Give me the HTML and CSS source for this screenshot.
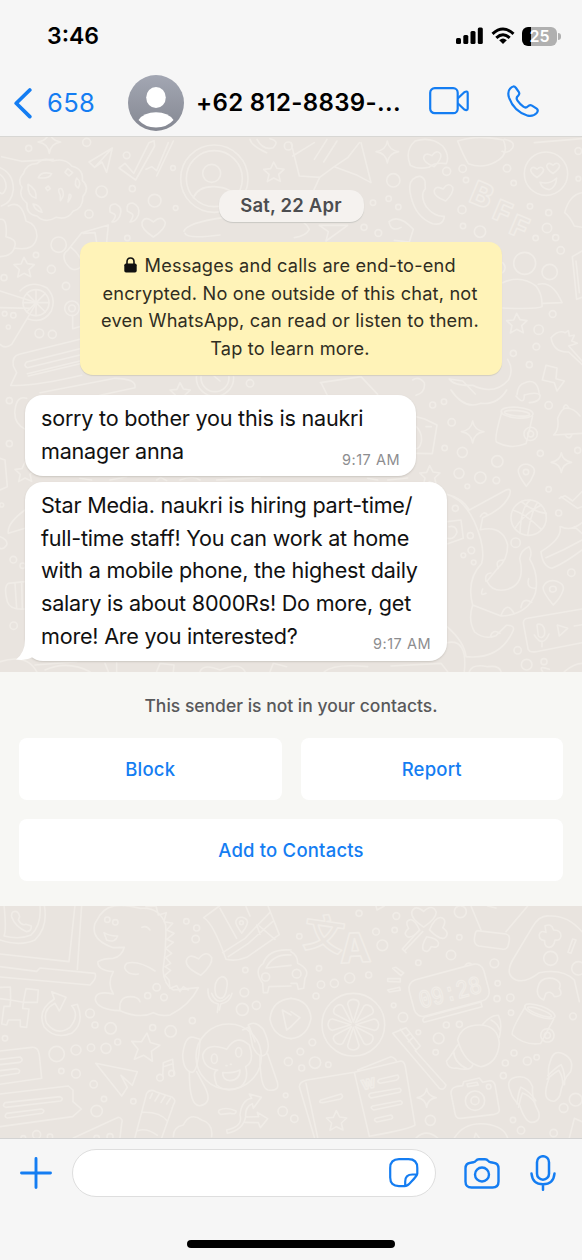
FILE: index.html
```html
<!DOCTYPE html>
<html lang="en">
<head>
<meta charset="utf-8">
<title>Chat</title>
<link rel="stylesheet" href="styles.css">
</head>
<body>
<div class="phone">
  <header class="top">
    <div class="status">
      <span class="clock">3:46</span>
      <div class="status-icons">
        <svg class="signal" width="28" height="18" viewBox="0 0 28 18"><rect x="0" y="11" width="5" height="6" rx="1.5"/><rect x="7.3" y="8" width="5" height="9" rx="1.5"/><rect x="14.5" y="4" width="5" height="13" rx="1.5"/><rect x="21.8" y="0.5" width="5" height="16.5" rx="1.5"/></svg>
        <svg class="wifi" width="24" height="18" viewBox="0 0 24 18"><path d="M1.500 6.800Q12-2.800 22.500 6.800M5.300 10.800Q12 4.800 18.700 10.800" fill="none" stroke="#000" stroke-width="3"/><path d="M8.200 13.200Q12 10 15.800 13.200L12 17Z"/></svg>
        <span class="battery"><span class="charge">25</span><i class="cap"></i></span>
      </div>
    </div>
    <div class="nav">
      <svg class="back" width="18" height="31" viewBox="0 0 18 31"><path d="M15.8 2L2.2 15.3L15.8 28.6" fill="none" stroke="#147df2" stroke-width="3.7" stroke-linecap="round" stroke-linejoin="round"/></svg>
      <span class="unread">658</span>
      <svg class="avatar" width="56" height="56" viewBox="0 0 56 56"><defs><linearGradient id="av" x1="0" y1="0" x2="0" y2="1"><stop offset="0" stop-color="#a3a7b3"/><stop offset="1" stop-color="#858892"/></linearGradient></defs><circle cx="28" cy="28" r="28" fill="url(#av)"/><ellipse cx="28" cy="22.5" rx="9.8" ry="10.5" fill="#fff"/><path d="M10.5 45Q16 37.3 28 37.3T45.500 45Q39 52.500 28 52.500T10.500 45Z" fill="#fff"/></svg>
      <span class="name">+62 812-8839-...</span>
      <svg class="video" width="41" height="28" viewBox="0 0 41 28"><rect x="1.200" y="1.200" width="27.500" height="25" rx="4.500"/><path d="M28.700 11.500L35.300 5.200Q38.600 3.500 38.700 6V21.500Q38.600 24 35.300 22.500L28.700 16.300"/></svg>
      <svg class="call" width="33" height="33" viewBox="0 0 33 33"><path d="M3.200 3.500Q6.500-.3 9 3L11.900 7.200Q13 9 11 10.900Q8.600 13 10.500 15.600Q13 19.200 16.400 21.700Q18.800 23.500 21 21.300Q22.800 19.300 25 20.600L29.700 23.700Q31.700 25.300 29.800 27.900Q26.500 31.700 20.800 30.700Q7 26.500 2 12.500Q.2 6.500 3.200 3.500Z"/></svg>
    </div>
  </header>

  <main class="chat">
    <svg class="wallpaper" viewBox="0 137 582 1001" width="582" height="1001" aria-hidden="true">
      <defs>
        <path id="star" d="M0-30L10-11L31-8L15 7L20 28L0 18L-19 29L-14 7L-30-8L-9-10Z"/>
        <path id="spark" d="M0-32Q4-5 34 0Q4 4 0 34Q-4 4-34 0Q-4-5 0-32Z"/>
        <path id="heart" d="M0 30Q-38 5-34-14Q-25-36 0-15Q25-38 36-13Q36 6 0 30Z"/>
        <path id="pin" d="M0 38Q-28 0-24-12Q-17-31 3-28Q31-20 22 2Q16 20 0 38ZM7-5A8 8 0 1 0-9-5A8 8 0 1 0 7-5"/>
        <g id="mug"><path d="M-38-36Q-55 50-45 56Q0 75 43 52L55-30"/><ellipse cx="8" cy="-38" rx="48" ry="16"/><ellipse cx="8" cy="-36" rx="38" ry="8"/><circle cx="54" cy="22" r="20"/><circle cx="54" cy="22" r="9"/></g>
        <path id="plane" d="M-60-48L65-23L50 18L16-12L35 24L18 50Z"/>
        <g id="flip"><path d="M-38-30Q-48-70-12-70Q24-70 30-32Q20 0 35 45Q36 75 10 72Q-10 70-18 15Q-36-8-38-30Z"/><path d="M-25 10Q-15-25-5-38Q20-20 32 10M-22 20Q-10-10-3-20Q18-8 28 14"/></g>
      </defs>
      <g class="doodle" transform="translate(0 136) scale(.33333)">
        <circle cx="86" cy="37" r="9"/><circle cx="260" cy="19" r="12"/><circle cx="380" cy="58" r="10"/><circle cx="305" cy="167" r="17"/><circle cx="397" cy="158" r="9"/><circle cx="464" cy="194" r="19"/><circle cx="519" cy="96" r="7"/><circle cx="267" cy="234" r="12"/><circle cx="527" cy="216" r="7"/><circle cx="176" cy="326" r="23"/><circle cx="108" cy="357" r="8"/><circle cx="154" cy="400" r="12"/><circle cx="12" cy="425" r="9"/><circle cx="198" cy="450" r="11"/><circle cx="118" cy="592" r="13"/><circle cx="157" cy="595" r="12"/><circle cx="382" cy="306" r="8"/>
        <use href="#spark" x="148" y="18"/><use href="#star" x="72" y="394"/><use href="#star" x="821" y="108"/><use href="#heart" x="460" y="273"/><use href="#star" x="540" y="770"/>
        <path d="M267 78L337 36L320 109L306 78L284 94ZM337 36L284 94M357 96L375 82L401 112L447 20L462 14L464 30L407 132ZM438 100L455 92L470 104L505 20M470 120L520 15"/>
        <path d="M70 113Q80 82 111 83Q132 62 158 75Q196 64 216 91Q251 99 247 133Q271 155 249 181Q249 218 219 226Q202 253 168 244Q135 264 111 240Q78 235 81 202Q54 180 66 154Q50 132 70 113Z"/><path d="M115 125Q123 105 155 113Q147 130 115 125ZM84 145Q82 180 108 187Q111 159 84 145ZM181 178Q169 155 185 158Q197 175 181 194ZM203 98L218 110L207 120L195 109ZM230 126Q245 139 235 156Q220 148 230 126ZM208 175Q220 177 204 198ZM145 150L151 158L143 164L137 156ZM99 204Q120 206 126 229Q106 225 99 204Z"/>
        <path d="M0 95Q40 112 40 160Q36 200 4 210M0 115Q20 130 18 156Q10 180 0 170M5 62L65 76L160 70M0 250Q23 245 18 302M18 302Q50 310 45 328Q40 360 0 362M25 210Q65 190 78 255Q110 265 111 300Q106 348 42 336"/>
        <path d="M330 228Q325 203 347 204Q371 216 359 241Q350 259 336 258Q351 240 344 235ZM382 225Q377 201 398 201Q422 210 415 237Q406 258 390 258Q403 239 397 234Z"/>
        <path d="M245 290L325 267L320 318L237 397Q215 410 197 380Q184 354 203 343ZM249 292L285 290L291 325M213 334Q240 355 248 385"/>
        <circle cx="643" cy="128" r="101"/><circle cx="643" cy="128" r="84"/><circle cx="635" cy="112" r="27"/><path d="M580 185Q595 150 643 152Q695 155 709 185M552 286Q560 260 670 245M555 292Q560 310 660 297"/>
        <path d="M0 465L110 500L35 625Q15 640 0 625M0 515L90 517M60 465Q90 430 140 455Q170 485 154 525Q130 565 82 548"/><circle cx="108" cy="500" r="39"/><path d="M108 461V539M69 500H147M80 472L136 528M136 472L80 528"/><circle cx="14" cy="533" r="7"/><circle cx="40" cy="538" r="8"/><circle cx="25" cy="573" r="6"/>
        <circle cx="216" cy="517" r="22"/><circle cx="216" cy="517" r="10"/><path d="M218 539V578L238 572M240 610L58 655Q35 660 40 690L50 710L32 748Q100 752 245 718M80 678L240 638M82 713L240 675M78 680Q70 690 82 695L240 657M85 720L240 683M120 770L345 727Q410 728 405 755L300 778"/>
        <circle cx="645" cy="725" r="56"/><circle cx="645" cy="725" r="42"/><path d="M630 710L660 735M750 10Q755 30 800 50M771 10Q790 45 820 35Q840 15 810 8"/><circle cx="750" cy="742" r="11"/><circle cx="865" cy="30" r="12"/>
      </g>
      <g class="doodle" transform="translate(291 136) scale(.33333)">
        <circle cx="467" cy="106" r="12"/><circle cx="515" cy="98" r="11"/><circle cx="525" cy="132" r="8"/><circle cx="648" cy="97" r="11"/><circle cx="307" cy="133" r="20"/><circle cx="293" cy="188" r="8"/><circle cx="322" cy="213" r="8"/><circle cx="246" cy="200" r="8"/><circle cx="219" cy="274" r="9"/><circle cx="262" cy="291" r="10"/><circle cx="513" cy="221" r="12"/><circle cx="516" cy="270" r="8"/><circle cx="567" cy="287" r="17"/><circle cx="668" cy="141" r="8"/><circle cx="717" cy="211" r="8"/><circle cx="773" cy="230" r="9"/><circle cx="768" cy="276" r="14"/><circle cx="734" cy="306" r="8"/><circle cx="794" cy="305" r="9"/><circle cx="809" cy="343" r="11"/><circle cx="862" cy="128" r="7"/><circle cx="785" cy="534" r="10"/><circle cx="743" cy="581" r="14"/><circle cx="736" cy="632" r="10"/><circle cx="667" cy="652" r="9"/><circle cx="715" cy="686" r="9"/><circle cx="862" cy="45" r="10"/>
        <use href="#spark" x="289" y="47"/><use href="#heart" transform="translate(425 70) rotate(-12) scale(.75)"/><use href="#heart" transform="translate(459 171) rotate(-12) scale(.82)"/><use href="#star" x="677" y="562"/>
        <path d="M358 88Q340 44 372 15Q420 0 455 30Q477 58 466 83Q430 78 414 94Q380 101 358 88ZM500 15Q560-5 637 12Q657 56 613 78Q574 99 532 83Q515 55 500 15ZM640 10Q674 16 665 35Q651 55 633 46M730 20L873 8"/>
        <path d="M5 60L70 20M0 20L25 120L86 124L130 92L199 118L240 140L210 20M86 124L65 170M130 92L170 65L205 20M70 70L108 10M98 78L138 15"/>
        <path d="M365 130Q390 110 402 135L403 158Q385 178 407 214Q431 243 460 241Q457 270 425 263Q375 245 360 182Q350 145 365 130Z"/>
        <circle cx="765" cy="113" r="65"/><path d="M747 139Q775 147 797 126Q795 155 774 161Q753 158 747 139Z"/><use href="#heart" transform="translate(738 108) scale(.55)"/><use href="#heart" transform="translate(786 96) scale(.55)"/>
        <text x="530" y="195" font-size="96" transform="rotate(23 530 195)">B</text><text x="600" y="245" font-size="86" transform="rotate(23 600 245)">F</text><text x="650" y="290" font-size="86" transform="rotate(23 650 290)">F</text>
        <path d="M873 170Q835 176 821 230Q835 239 850 270L873 274M294 257Q323 232 367 280L355 318L310 313M294 257Q300 290 330 274M85 268L170 268L105 315L112 287ZM10 255Q40 250 55 280Q45 300 10 305"/>
        <circle cx="701" cy="382" r="33"/><circle cx="776" cy="408" r="23"/><path d="M635 380Q650 395 635 410M635 440Q690 415 735 450Q755 475 753 512Q740 520 635 516M742 445Q785 434 813 500L756 502M873 345L844 362L857 490L873 484M855 375L865 470"/>
        <path d="M780 605Q802 580 823 590L832 584L835 600L850 598L842 615L859 622L833 630L873 675M780 605Q788 651 833 648L873 685M765 688L798 696L795 728L820 735L798 765L790 740L754 732ZM650 670Q669 700 653 731Q610 780 545 748Q488 750 475 729L515 735L553 774M678 776Q680 745 702 740Q740 725 745 776M90 740L110 780M88 740L210 722L260 775M365 732Q383 719 400 740Q404 770 375 778"/>
      </g>
      <g class="doodle" transform="translate(0 390) scale(.33333)">
        <circle cx="28" cy="32" r="9"/><circle cx="28" cy="161" r="9"/><circle cx="40" cy="509" r="10"/><circle cx="41" cy="707" r="11"/><circle cx="68" cy="527" r="8"/><path d="M80 25Q50 15 45 60Q40 100 76 118M0 205L15 210L22 290L0 300M0 440Q25 450 20 465Q10 480 0 475M75 360Q20 400 25 430L75 415M75 575L25 580Q10 590 22 635Q30 660 75 657M45 580L50 655M65 580L67 657M105 825L230 815M315 820L325 845M350 818V845M470 845L480 820L522 825L520 845M600 845Q610 820 660 840Q720 815 735 845M810 845L820 820L860 830"/><use href="#star" x="75" y="246"/><circle cx="5" cy="345" r="6"/>
        <path d="M0 815Q80 790 110 845M135 840Q200 810 270 845M240 265L275 270M330 270L380 260M470 270L482 262L500 272M540 270Q580 255 600 270M650 270L780 262"/>
      </g>
      <g class="doodle" transform="translate(291 390) scale(.33333)">
        <circle cx="425" cy="45" r="9"/><circle cx="459" cy="35" r="8"/><circle cx="482" cy="97" r="11"/><circle cx="461" cy="174" r="8"/><circle cx="514" cy="187" r="15"/><circle cx="619" cy="214" r="17"/><circle cx="504" cy="250" r="15"/><circle cx="568" cy="263" r="17"/><circle cx="616" cy="271" r="10"/><circle cx="529" cy="289" r="7"/><circle cx="773" cy="46" r="11"/><circle cx="748" cy="190" r="9"/><circle cx="860" cy="181" r="9"/><circle cx="773" cy="298" r="8"/><circle cx="803" cy="369" r="9"/><circle cx="674" cy="458" r="14"/><circle cx="841" cy="548" r="11"/><circle cx="493" cy="355" r="9"/><circle cx="538" cy="437" r="9"/><circle cx="541" cy="481" r="10"/><circle cx="517" cy="496" r="7"/><circle cx="548" cy="517" r="7"/><circle cx="680" cy="781" r="11"/><circle cx="707" cy="824" r="16"/><circle cx="759" cy="815" r="9"/>
        <use href="#spark" x="545" y="125"/><use href="#spark" transform="translate(811 217) scale(.9)"/><use href="#star" x="416" y="257"/><use href="#pin" x="706" y="251"/><use href="#pin" transform="translate(787 603) scale(1.25 1.1)"/><use href="#mug" transform="translate(667 105) rotate(5)"/>
        <path d="M376 80L401 87L438 105L424 191L376 190M376 110Q395 130 391 155Q386 180 370 175M405 110H421M480 0Q520 60 570 40Q620 45 647 0M675 18Q700 48 700 15Q735 5 747 15Q750 35 715 38"/>
        <path d="M788 135Q805 120 800 85Q812 54 826 54Q850 55 867 78M788 135L873 130M817 54Q824 35 834 54M823 135Q835 153 843 134M810 320L860 355L873 350M805 325L822 317L845 333L873 305"/>
        <circle cx="713" cy="383" r="53"/><path d="M665 360Q702 370 751 418M691 335Q728 366 766 370M672 415Q700 370 751 345M718 330Q690 350 687 430M740 337Q720 366 710 436"/>
        <path d="M468 313Q515 325 535 360L645 300Q664 292 655 317Q637 357 575 383L568 419Q635 405 650 465Q650 510 620 535L588 574Q605 609 650 598Q705 580 686 506Q689 480 714 470Q725 485 716 507Q745 555 733 610Q710 675 630 678L545 645Q525 570 572 520Q585 475 550 395Q520 330 468 313M568 380Q578 360 590 375M622 535Q610 508 640 510M585 574Q580 550 600 549M585 610Q565 620 575 597M630 676Q648 630 670 672M690 653Q695 620 722 637M733 595Q705 595 713 566M545 645Q530 690 551 726Q580 750 615 737L646 706Q675 705 665 725Q625 810 525 800Q520 755 468 710M598 740Q605 715 627 730"/>
        <path d="M468 395L510 390L517 445L468 462M474 410Q496 405 498 427Q490 450 470 445M807 410Q815 445 750 485Q755 530 783 535Q820 520 873 480M810 410Q840 425 873 398M765 503Q820 480 873 450M850 410L873 430"/>
        <path d="M873 657L710 685Q694 687 698 705L710 770Q710 789 735 785L873 758M738 705Q742 700 753 705Q764 715 760 735Q752 748 742 738ZM730 735Q755 775 774 732M753 758V770M799 705L805 738L830 715ZM850 708L873 704"/>
        <path d="M468 758Q530 745 520 845M535 845Q545 820 590 830Q625 825 630 845M755 845Q740 825 775 838M820 845Q850 820 873 820M100 845Q130 820 230 830M300 828L450 820L470 845M230 265L260 270M290 270L350 264"/>
      </g>
      <g class="doodle" transform="translate(0 900) scale(.33333)">
        <path d="M0 120Q60 140 105 120Q145 80 133 17M12 15Q20 90 12 108Q60 120 93 105Q125 75 120 17M40 35Q55 30 59 50L55 60Q65 78 78 73L94 78Q95 93 80 95Q45 80 35 50Q33 40 40 35ZM225 15L207 185L0 162M245 15L232 208M0 200L110 214L120 204L285 220Q292 235 270 255L0 231"/>
        <path d="M300 45Q330 0 420 25Q480 20 497 75Q500 140 489 210Q492 255 520 270L595 263Q570 315 510 345Q480 350 460 338Q420 358 360 332Q295 330 286 300Q285 270 340 282Q320 250 340 215Q290 210 294 185Q310 175 340 175Q365 170 373 142L340 143Q270 120 285 70ZM360 332Q355 290 390 290Q415 290 420 305M465 213Q415 180 380 190Q365 205 388 220Q405 225 415 222M312 98Q330 109 353 108Q345 130 320 120ZM426 82Q440 75 450 90M438 20L468 18L475 45L499 38L492 65L518 70L500 90L522 100L500 118L520 127L497 145L515 160L497 173L512 190L495 200L512 211L494 226L507 240L510 265L530 257L540 275L550 260L565 270"/>
        <circle cx="322" cy="59" r="8"/><circle cx="346" cy="67" r="8"/><circle cx="470" cy="262" r="11"/><circle cx="443" cy="287" r="9"/><circle cx="492" cy="292" r="10"/><circle cx="559" cy="64" r="8"/><circle cx="590" cy="84" r="9"/><circle cx="587" cy="117" r="11"/><circle cx="736" cy="210" r="8"/><circle cx="733" cy="277" r="13"/><circle cx="727" cy="328" r="18"/><circle cx="769" cy="316" r="12"/><circle cx="797" cy="231" r="12"/><circle cx="577" cy="362" r="9"/><circle cx="270" cy="340" r="13"/><circle cx="285" cy="375" r="9"/><circle cx="332" cy="385" r="17"/><circle cx="458" cy="383" r="9"/><circle cx="512" cy="394" r="17"/><circle cx="353" cy="426" r="9"/><circle cx="318" cy="445" r="15"/><circle cx="273" cy="443" r="11"/><circle cx="228" cy="450" r="15"/><circle cx="170" cy="462" r="23"/><circle cx="184" cy="513" r="8"/><circle cx="228" cy="521" r="13"/><circle cx="281" cy="553" r="11"/><circle cx="312" cy="597" r="8"/><circle cx="290" cy="633" r="17"/><circle cx="400" cy="604" r="8"/><circle cx="15" cy="415" r="8"/><circle cx="865" cy="485" r="12"/><circle cx="848" cy="634" r="14"/><circle cx="857" cy="586" r="7"/><circle cx="110" cy="704" r="12"/><circle cx="150" cy="710" r="8"/><circle cx="70" cy="714" r="7"/><circle cx="290" cy="714" r="8"/><circle cx="330" cy="710" r="9"/>
        <path d="M611 53L658 18M611 53Q640 70 678 178Q710 185 740 172L838 104L804 18M668 158L735 115L810 37M685 170L745 130L818 65M778 78L825 118M660 25L710 115M738 20L750 48M770 75L780 103"/><use href="#pin" transform="translate(725 72) scale(.72)"/><use href="#heart" transform="translate(598 193) rotate(-8) scale(1.1)"/><use href="#star" transform="translate(435 441) rotate(8) scale(1.4)"/><use href="#plane" x="347" y="538"/>
        <path d="M646 278Q640 240 665 230Q687 232 680 265Q677 295 660 295Q647 290 646 278ZM624 267Q622 305 655 312L652 337M696 280Q690 307 662 312L658 330M635 280Q655 325 688 285M873 150Q805 145 790 190Q760 210 788 250L790 278L803 278L807 260L873 258M873 165Q820 160 798 204L873 196M873 295Q815 300 810 358Q820 410 873 416M847 330L873 345M847 330L860 390L873 380"/>
        <path d="M0 262L31 261L32 300L0 296M32 300L70 307L78 266L115 270L112 307L70 307M70 307L68 325L87 327L80 382L61 380V360H25L20 375L5 372L12 319H30L32 300M155 275L198 292L178 333L165 310Q125 330 140 370Q170 410 210 382Q240 345 215 317L232 313Q255 370 215 400Q165 420 132 380Q110 330 163 297Z"/>
        <path d="M0 453L95 442Q115 440 118 465L125 535L0 553M0 478L60 471Q73 480 60 487L0 494M0 512L50 506Q65 510 55 520L0 528M0 582L205 558L219 570V605L244 627L218 650L0 680M15 608L180 590Q193 595 182 603L17 622Q5 618 15 608ZM20 640L125 627Q138 632 126 640L22 654Q10 650 20 640ZM220 714L355 652Q370 655 365 670L360 714"/>
        <path d="M405 712L440 580Q450 565 467 575L517 592Q530 600 520 615L485 714M427 637Q480 635 501 662M413 692Q440 683 472 706M457 580L450 595M477 583L465 603M495 588L483 607M511 595L500 612M520 710Q520 680 550 675Q570 635 605 660Q640 670 635 710M488 529L490 488L518 478L522 525M490 500L518 491"/><circle cx="480" cy="533" r="10"/><circle cx="515" cy="520" r="9"/>
        <circle cx="686" cy="470" r="98"/><path d="M650 555Q635 515 653 510Q610 505 608 465Q620 425 680 448Q710 400 748 435Q765 485 737 500Q748 540 720 562Q680 580 650 555ZM668 518Q700 520 720 510Q720 540 690 542Q668 540 668 518ZM580 412Q555 405 548 465Q550 515 578 517Q595 510 600 418ZM568 517Q568 620 600 617Q640 610 614 560L590 515M745 375Q765 360 790 388Q815 440 798 462Q778 480 758 440ZM780 468Q780 565 804 570Q845 575 829 538L803 462M728 390L748 380L765 425"/><ellipse cx="643" cy="476" rx="9" ry="14"/><ellipse cx="716" cy="457" rx="9" ry="14"/><path d="M678 497H681M691 493H694M658 630Q680 620 708 633Q710 645 690 640L662 643Q652 637 658 630ZM680 690Q730 680 720 645Q725 600 755 595L748 582L784 592L760 625L757 611Q735 620 737 650Q730 690 682 700ZM738 651L776 650L772 637L803 656L781 683L775 668L735 667"/>
      </g>
      <g class="doodle" transform="translate(291 900) scale(.33333)">
        <text class="cjk" x="33" y="138" font-size="122" transform="rotate(8 33 138)">文</text><text x="148" y="190" font-size="122" transform="rotate(-3 148 190)">A</text>
        <circle cx="25" cy="109" r="8"/><circle cx="204" cy="40" r="9"/><circle cx="316" cy="48" r="10"/><circle cx="255" cy="95" r="10"/><circle cx="311" cy="90" r="8"/><circle cx="274" cy="136" r="16"/><circle cx="382" cy="188" r="8"/><circle cx="480" cy="165" r="14"/><circle cx="505" cy="112" r="8"/><circle cx="508" cy="35" r="18"/><circle cx="84" cy="205" r="8"/><circle cx="90" cy="254" r="11"/><circle cx="130" cy="250" r="12"/><circle cx="176" cy="234" r="15"/><circle cx="233" cy="225" r="9"/><circle cx="17" cy="221" r="13"/><circle cx="75" cy="288" r="9"/><circle cx="64" cy="427" r="10"/><circle cx="28" cy="455" r="10"/><circle cx="72" cy="488" r="17"/><circle cx="32" cy="504" r="9"/><circle cx="112" cy="494" r="8"/><circle cx="308" cy="316" r="7"/><circle cx="336" cy="352" r="14"/><circle cx="382" cy="397" r="7"/><circle cx="443" cy="415" r="16"/><circle cx="434" cy="457" r="8"/><circle cx="466" cy="375" r="9"/><circle cx="505" cy="373" r="9"/><circle cx="610" cy="190" r="13"/><circle cx="620" cy="250" r="8"/><circle cx="618" cy="296" r="9"/><circle cx="658" cy="293" r="11"/><circle cx="660" cy="338" r="8"/><circle cx="846" cy="349" r="10"/><circle cx="779" cy="175" r="21"/><circle cx="862" cy="205" r="20"/><circle cx="669" cy="459" r="9"/><circle cx="643" cy="489" r="9"/><circle cx="637" cy="527" r="9"/><circle cx="709" cy="483" r="12"/><circle cx="737" cy="472" r="8"/><circle cx="854" cy="599" r="19"/><circle cx="818" cy="624" r="13"/><circle cx="666" cy="660" r="8"/><circle cx="690" cy="691" r="11"/><circle cx="788" cy="699" r="11"/><circle cx="418" cy="661" r="15"/><circle cx="10" cy="656" r="11"/>
        <use href="#heart" transform="translate(398 50) scale(1.05)"/><use href="#heart" transform="translate(364 87) rotate(-80) scale(.75)"/><use href="#heart" transform="translate(442 85) rotate(80) scale(.9)"/><use href="#heart" transform="translate(416 130) rotate(155) scale(.72)"/><path d="M395 95L340 153M385 90L334 147L345 158M540 18L570 90M710 18L645 95M558 92L645 102Q660 105 653 130Q650 152 632 147L563 138Q545 132 552 105Q553 94 558 92ZM305 205L315 202L338 219L330 227ZM290 236L328 236V246L290 244ZM290 270L326 262L328 271L295 276Z"/>
        <g transform="translate(475 270) rotate(-15)"><rect x="-117" y="-56" width="232" height="113" rx="27"/><text class="clock-face" x="-96" y="32" font-size="76" textLength="192" lengthAdjust="spacingAndGlyphs">09:28</text><path d="M-92 59H82V74H-98Q-105 65-92 59M65-59Q75-68 85-57"/></g>
        <circle cx="187" cy="374" r="94"/><path id="slice" d="M187 366L170 312Q171 300 187 298Q205 300 204 312Z"/><use href="#slice" transform="rotate(45 187 374)"/><use href="#slice" transform="rotate(90 187 374)"/><use href="#slice" transform="rotate(135 187 374)"/><use href="#slice" transform="rotate(180 187 374)"/><use href="#slice" transform="rotate(225 187 374)"/><use href="#slice" transform="rotate(270 187 374)"/><use href="#slice" transform="rotate(315 187 374)"/>
        <path d="M0 295Q55 300 60 355Q50 410 0 416M0 335L27 353L0 380M0 155Q20 165 20 190Q60 210 42 235L38 265L22 268L18 250L0 250M873 95Q830 45 775 48Q745 45 725 80L665 180Q640 225 675 240Q705 250 745 218Q815 205 850 240L865 305M762 78Q780 68 788 90Q810 90 810 108Q808 123 792 120Q788 143 773 142Q760 140 761 122Q743 120 745 103Q748 90 765 97ZM845 117L855 120L840 160L831 157ZM740 265Q745 230 785 235Q815 245 805 265Q820 290 790 290Q780 270 765 280L758 300Q735 290 740 265Z"/>
        <use href="#mug" transform="translate(726 367) rotate(20)"/><path d="M305 400L345 383L388 438L373 452L465 555Q460 573 445 565ZM328 388L375 450M345 410L357 400M352 425L366 413M500 420Q510 375 565 375Q620 375 625 430Q620 490 570 500Q520 490 500 420ZM575 373Q600 345 622 346Q635 370 625 412M600 360Q620 370 626 390M500 435Q475 475 466 483Q470 508 495 504Q540 515 545 495M488 455Q490 490 530 507"/>
        <path d="M70 712L25 560Q25 545 48 540L190 517L235 709M45 550L80 712M190 517L330 483Q340 484 343 500L372 675Q365 685 235 709M200 510L300 470Q315 475 316 484M90 600L150 582Q160 590 148 597L95 608Q80 608 90 600ZM265 538L320 525Q328 535 315 541L267 550Q255 545 265 538ZM238 580L325 565Q335 570 326 577L240 594Q228 587 238 580ZM245 618L328 602Q338 607 330 613L248 630Q235 623 245 618ZM255 655L300 645Q310 652 300 657L257 666Q245 660 255 655Z"/><text x="215" y="570" font-size="40" transform="rotate(-13 215 570)">W</text><use href="#star" transform="translate(136 662)"/>
        <use href="#spark" transform="translate(407 593) scale(.85)"/><path d="M495 560L515 557L518 545L565 534L575 547L596 542Q610 542 613 560L625 630Q625 640 610 643L510 655Q495 657 492 640L480 580Q480 563 495 560ZM528 552L558 547L562 555L530 560Z"/><circle cx="552" cy="602" r="29"/><circle cx="552" cy="602" r="12"/><circle cx="593" cy="560" r="7"/>
        <use href="#flip" transform="translate(701 598) rotate(-10)"/><use href="#flip" transform="translate(797 530) rotate(28)"/><path d="M490 714Q520 665 585 672Q640 680 650 714M550 714L554 700L565 714M375 714Q405 685 440 714M850 655L873 665M850 655L835 714M255 18L258 30L280 18M590 18L615 24"/>
      </g>
    </svg>

    <div class="thread">
      <div class="date">Sat, 22 Apr</div>
      <div class="notice"><svg class="lock" width="13" height="16" viewBox="0 0 13 16"><path d="M3 8V4.700Q3 1 6.500 1T10 4.700V8" fill="none" stroke="#111" stroke-width="1.600"/><rect x=".3" y="6.500" width="12.400" height="9" rx="1.700" fill="#111"/></svg> Messages and calls are end-to-end<br>encrypted. No one outside of this chat, not<br>even WhatsApp, can read or listen to them.<br>Tap to learn more.</div>
      <div class="bubble first"><p>sorry to bother you this is naukri<br>manager anna</p><time>9:17 AM</time></div>
      <div class="bubble second"><p>Star Media. naukri is hiring part-time/<br>full-time staff! You can work at home<br>with a mobile phone, the highest daily<br>salary is about 8000Rs! Do more, get<br>more! Are you interested?</p><time>9:17 AM</time><svg class="tail" width="28" height="22" viewBox="0 0 28 22"><path d="M9 0Q9 14 0 20.500Q10 22 17 18Q21 20.500 26 21V0Z" fill="#fff"/></svg></div>
    </div>

    <section class="unknown">
      <p class="hint">This sender is not in your contacts.</p>
      <div class="actions">
        <button>Block</button><button>Report</button><button class="wide">Add to Contacts</button>
      </div>
    </section>
  </main>

  <footer class="composer">
    <div class="tools">
      <svg class="plus" width="32" height="32" viewBox="0 0 32 32"><path d="M16 1.500V30.500M1.500 16H30.500"/></svg>
      <div class="field"><svg class="sticker" width="30" height="30" viewBox="0 0 30 30"><path d="M10 1.200H19.500Q28.300 1.200 28.300 10V15.500Q28 18 22 24Q18.500 28.200 15.500 28.200H10Q1.200 28.200 1.200 19.500V10Q1.200 1.200 10 1.200ZM28 16.500H23.500Q16.200 16.500 16.200 23.500V28"/></svg></div>
      <svg class="camera" width="36" height="31" viewBox="0 0 36 31"><path d="M6.500 4.800L9.500 4.300Q11 4.200 12 2.700Q13 1.300 15 1.300H21Q23 1.300 24 2.700Q25 4.200 26.500 4.300L29.500 4.800Q34.500 5.300 34.500 10.500V23.500Q34.500 29.500 28.500 29.500H7.500Q1.500 29.500 1.500 23.500V10.500Q1.500 5.300 6.500 4.800Z"/><circle cx="18" cy="16.500" r="7"/></svg>
      <svg class="mic" width="26" height="36" viewBox="0 0 26 36"><rect x="7" y="1.200" width="12" height="23.500" rx="6"/><path d="M1.500 18.500Q2.500 29.300 13 29.300T24.500 18.500M13 29.300V34.800"/></svg>
    </div>
    <div class="home"></div>
  </footer>
</div>
</body>
</html>
```
FILE: styles.css
```css
* { box-sizing: border-box; }
body { margin: 0; font-family: Inter, "Liberation Sans", sans-serif; color: #111; }
p { margin: 0; }
svg { display: block; flex: none; }
.phone { width: 582px; height: 1260px; display: flex; flex-direction: column; background: #f6f6f6; overflow: hidden; }

.top { height: 137px; flex: none; border-bottom: 1px solid #d8d7d4; }
.status { height: 72px; padding: 0 25px 0 47px; display: flex; align-items: center; justify-content: space-between; }
.clock { font-size: 23px; font-weight: 600; line-height: 28px; color: #000; }
.status-icons { display: flex; align-items: center; gap: 7px; }
.battery { position: relative; width: 35px; height: 19px; border-radius: 6px; background: linear-gradient(90deg, #000 26%, #b0b0b0 26%); color: #fff; display: flex; align-items: center; justify-content: center; }
.charge { font-size: 16px; font-weight: 600; line-height: 19px; }
.cap { position: absolute; right: -4px; top: 6px; width: 3px; height: 7px; border-radius: 0 3px 3px 0; background: #b0b0b0; }
.nav { height: 62px; display: flex; align-items: center; padding-left: 14px; }
.unread { margin-left: 15px; width: 65px; font-size: 25.5px; line-height: 30px; letter-spacing: .4px; color: #147df2; white-space: nowrap; }
.avatar { margin-left: 16px; }
.name { margin-left: 12px; width: 220px; font-size: 24px; font-weight: 600; line-height: 30px; letter-spacing: .33px; color: #000; white-space: nowrap; }
.video { margin-left: 13px; margin-top: -4px; }
.call { margin-left: 37px; margin-top: -4px; }
.video, .call { fill: none; stroke: #147df2; stroke-width: 2.2; stroke-linejoin: round; }

.chat { position: relative; height: 1001px; flex: none; background: #e9e4df; overflow: hidden; }
.wallpaper { position: absolute; left: 0; top: 0; }
.wallpaper path, .wallpaper circle, .wallpaper ellipse, .wallpaper rect, .wallpaper text { vector-effect: non-scaling-stroke; }
.doodle { fill: none; stroke: #f0ece7; stroke-width: 1.6; stroke-linecap: round; stroke-linejoin: round; }
.doodle text { font-family: Inter, sans-serif; font-weight: 800; }
.doodle .cjk { font-family: "Noto Sans CJK SC", sans-serif; font-weight: 700; }
.doodle .clock-face { font-family: "Liberation Mono", monospace; font-weight: 400; stroke-width: 1.3; }

.thread { position: relative; height: 535px; padding-top: 53px; display: flex; flex-direction: column; align-items: flex-start; }
.date { align-self: center; width: 145px; height: 32px; border-radius: 14px; background: #f5f2ef; box-shadow: 0 1px 1px #c9c8c4; font-size: 18.5px; font-weight: 600; line-height: 31px; color: #4c4d50; text-align: center; letter-spacing: .2px; white-space: nowrap; }
.notice { align-self: center; width: 422px; height: 133px; margin-top: 20px; padding: 10px 2px 0 0; border-radius: 13px; background: #fff3b8; box-shadow: 0 1px 1px #d3cec1; font-size: 18.2px; line-height: 27.6px; letter-spacing: .18px; color: #302d22; text-align: center; white-space: nowrap; }
.lock { display: inline-block; vertical-align: -1px; margin-right: 2px; }
.bubble { position: relative; margin-left: 25px; padding: 7px 16px; background: #fff; border-radius: 18px; box-shadow: 0 1px 2px #cbc6c0; }
.bubble p { position: relative; z-index: 1; font-size: 21.6px; line-height: 32.7px; letter-spacing: -.23px; white-space: nowrap; }
.bubble time { position: absolute; right: 16px; bottom: 8px; font-size: 14.5px; line-height: 18px; color: #8d8d8f; letter-spacing: .5px; }
.first { width: 391px; height: 81px; margin-top: 20px; }
.first time { bottom: 7px; }
.second { width: 422px; height: 179px; margin-top: 6px; }
.tail { position: absolute; left: -9px; bottom: 0; }

.unknown { position: relative; height: 234px; padding: 20px 19px 0; background: #f7f7f4; }
.hint { font-size: 17.5px; line-height: 28px; font-weight: 500; text-align: center; color: #59595b; }
.actions { margin-top: 18px; display: grid; grid-template-columns: 1fr 1fr; gap: 19px; }
.actions button { height: 62px; padding: 0; border: 0; border-radius: 8px; background: #fff; color: #147df2; font: 500 18.5px/62px Inter, sans-serif; letter-spacing: .2px; }
.actions .wide { grid-column: 1 / 3; }

.composer { height: 122px; flex: none; border-top: 1px solid #d3d3d3; background: #f6f6f6; }
.tools { height: 68px; display: flex; align-items: center; padding-left: 20px; }
.tools svg { fill: none; stroke: #147df2; stroke-width: 2.2; stroke-linecap: round; stroke-linejoin: round; }
.tools .plus { stroke-width: 2.9; }
.field { margin-left: 20px; width: 364px; height: 48px; border: 1.5px solid #dedede; border-radius: 24px; background: #fff; display: flex; align-items: center; justify-content: flex-end; padding-right: 16px; }
.tools .camera { margin-left: 28px; stroke-width: 2.4; }
.tools .mic { margin-left: 30px; stroke-width: 2.5; }
.home { width: 208px; height: 8px; border-radius: 4px; background: #000; margin: 33px auto 0; }
```
